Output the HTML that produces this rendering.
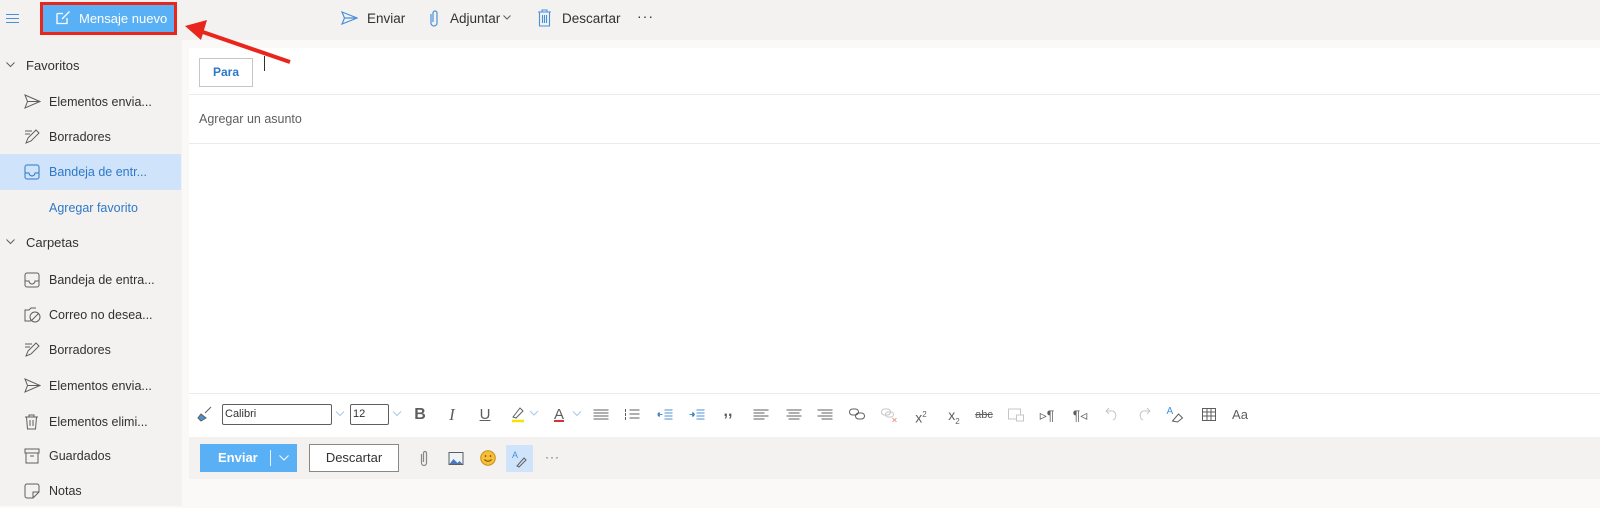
<!DOCTYPE html>
<html><head><meta charset="utf-8"><style>
*{margin:0;padding:0;box-sizing:border-box}
body{width:1600px;height:506px;background:#faf9f8;font-family:"Liberation Sans",sans-serif;font-size:12.5px;color:#323130;position:relative;overflow:hidden}
.a{position:absolute}
.side{left:0;top:0;width:182px;height:506px;background:#f3f2f1}
.top{left:0;top:0;width:1600px;height:40px;background:#f3f2f1}
.item{position:absolute;left:0;width:181px;height:34px;line-height:34px;padding-left:49px;white-space:nowrap}
.item svg{position:absolute;left:24px;top:9px}
.c{position:absolute;transform:translateX(-50%)}
.fmt{position:absolute;top:406px;font-size:14px;color:#605e5c;line-height:18px;transform:translateX(-50%)}
</style></head><body>
<div class="a top"></div>
<div class="a side"></div>
<!-- hamburger -->
<svg class="a" style="left:6px;top:13px" width="14" height="11"><path d="M0 1.5H13M0 5.5H13M0 9.5H13" stroke="#4a90d9" stroke-width="1"/></svg>
<!-- new message button -->
<div class="a" style="left:40px;top:2px;width:137px;height:33px;border:3px solid #e8261c;background:#5ab0f5"></div>
<svg class="a" style="left:56px;top:10px" width="15" height="15"><path d="M1 3.5V13.5H11V8M6 9L13.5 1.5" stroke="#fff" stroke-width="1.3" fill="none"/><path d="M1 3.5H7" stroke="#fff" stroke-width="1.3"/></svg>
<div class="a" style="left:79px;top:11px;color:#fff;font-size:13px">Mensaje nuevo</div>
<!-- top toolbar -->
<svg class="a" style="left:341px;top:11px" width="17" height="14"><path d="M1 1L16 7L1 13L3.5 7Z M3.5 7H16" stroke="#4a90d9" stroke-width="1.2" fill="none"/></svg>
<div class="a" style="left:367px;top:11px;font-size:13.5px">Enviar</div>
<svg class="a" style="left:429px;top:9px" width="10" height="18"><path d="M2 5V14A3 3 0 0 0 8 14V4A2 2 0 0 0 4 4V13" stroke="#4a90d9" stroke-width="1.2" fill="none"/></svg>
<div class="a" style="left:450px;top:11px;font-size:13.5px">Adjuntar</div>
<svg class="a" style="left:503px;top:15px" width="8" height="5"><path d="M0.5 0.5L4 4L7.5 0.5" stroke="#605e5c" fill="none"/></svg>
<svg class="a" style="left:537px;top:9px" width="15" height="18"><path d="M1 3H14M5 3V1H10V3M2.5 3V17H12.5V3M5.5 6V14M7.5 6V14M9.5 6V14" stroke="#4a90d9" stroke-width="1.1" fill="none"/></svg>
<div class="a" style="left:562px;top:11px;font-size:13.5px">Descartar</div>
<div class="a" style="left:637px;top:8px;font-size:14px;letter-spacing:1px">···</div>
<!-- sidebar -->
<svg class="a" style="left:6px;top:62px" width="9" height="6"><path d="M0.5 0.5L4.5 4.5L8.5 0.5" stroke="#605e5c" fill="none"/></svg>
<div class="a" style="left:26px;top:58px;font-size:13px">Favoritos</div>
<div class="item" style="top:85px"><svg width="17" height="15"><path d="M1 1L16 7.5L1 14L3.5 7.5Z M3.5 7.5H16" stroke="#605e5c" fill="none"/></svg>Elementos envia...</div>
<div class="item" style="top:120px"><svg width="17" height="16"><path d="M1 2H8M1 5H6M2 14L4 9L12 1L15 4L7 12Z" stroke="#605e5c" fill="none"/></svg>Borradores</div>
<div class="item" style="top:154px;height:36px;line-height:36px;background:#cfe4fa;color:#2e78c7"><svg width="16" height="16" style="top:10px"><rect x="1" y="1" width="14" height="14" rx="2" stroke="#2e78c7" fill="none"/><path d="M1 9H5A3 3 0 0 0 11 9H15" stroke="#2e78c7" fill="none"/></svg>Bandeja de entr...</div>
<div class="item" style="top:191px;color:#2e78c7">Agregar favorito</div>
<svg class="a" style="left:6px;top:239px" width="9" height="6"><path d="M0.5 0.5L4.5 4.5L8.5 0.5" stroke="#605e5c" fill="none"/></svg>
<div class="a" style="left:26px;top:235px;font-size:13px">Carpetas</div>
<div class="item" style="top:263px"><svg width="16" height="16"><rect x="1" y="1" width="14" height="14" rx="2" stroke="#605e5c" fill="none"/><path d="M1 9H5A3 3 0 0 0 11 9H15" stroke="#605e5c" fill="none"/></svg>Bandeja de entra...</div>
<div class="item" style="top:298px"><svg width="17" height="16"><path d="M7 14H1V3H5L7 1H12" stroke="#605e5c" fill="none"/><circle cx="11" cy="10" r="5" stroke="#605e5c" fill="none"/><path d="M7.5 13.5L14.5 6.5" stroke="#605e5c"/></svg>Correo no desea...</div>
<div class="item" style="top:333px"><svg width="17" height="16"><path d="M1 2H8M1 5H6M2 14L4 9L12 1L15 4L7 12Z" stroke="#605e5c" fill="none"/></svg>Borradores</div>
<div class="item" style="top:369px"><svg width="17" height="15"><path d="M1 1L16 7.5L1 14L3.5 7.5Z M3.5 7.5H16" stroke="#605e5c" fill="none"/></svg>Elementos envia...</div>
<div class="item" style="top:405px"><svg width="15" height="16"><path d="M1 3H14M5 3V1H10V3M2.5 3L3.5 15H11.5L12.5 3M6 6V12M9 6V12" stroke="#605e5c" fill="none"/></svg>Elementos elimi...</div>
<div class="item" style="top:439px"><svg width="16" height="16"><rect x="1" y="1" width="14" height="4" stroke="#605e5c" fill="none"/><path d="M2 5V15H14V5M6 8H10" stroke="#605e5c" fill="none"/></svg>Guardados</div>
<div class="item" style="top:474px"><svg width="16" height="16"><path d="M1 3A2 2 0 0 1 3 1H13A2 2 0 0 1 15 3V9L9 15H3A2 2 0 0 1 1 13Z M9 15V9H15" stroke="#605e5c" fill="none"/></svg>Notas</div>
<!-- compose -->
<div class="a" style="left:189px;top:40px;width:1411px;height:8px;background:#faf9f8"></div>
<div class="a" style="left:189px;top:48px;width:1411px;height:389px;background:#fff"></div>
<div class="a" style="left:189px;top:94px;width:1411px;height:1px;background:#edebe9"></div>
<div class="a" style="left:189px;top:143px;width:1411px;height:1px;background:#edebe9"></div>
<div class="a" style="left:189px;top:393px;width:1411px;height:1px;background:#edebe9"></div>
<div class="a" style="left:199px;top:58px;width:54px;height:29px;border:1px solid #c8c6c4;color:#2e78c7;font-weight:bold;font-size:12px;text-align:center;line-height:27px">Para</div>
<div class="a" style="left:264px;top:56px;width:1px;height:15px;background:#323130"></div>
<div class="a" style="left:199px;top:112px;color:#605e5c">Agregar un asunto</div>
<!-- format toolbar -->
<svg class="a" style="left:197px;top:406px" width="16" height="16"><path d="M14 1L8 7M4 8L9 12L4 15L1 12Z" stroke="#605e5c" fill="#4a90d9"/></svg>
<div class="a" style="left:222px;top:404px;width:110px;height:21px;border:1px solid #605e5c;border-radius:2px;font-size:11px;line-height:19px;padding-left:2px">Calibri</div>
<svg class="c" style="left:340px;top:411px" width="9" height="6"><path d="M0.5 0.5L4.5 4.5L8.5 0.5" stroke="#a7c8ea" fill="none"/></svg>
<div class="a" style="left:350px;top:404px;width:39px;height:21px;border:1px solid #605e5c;border-radius:2px;font-size:11px;line-height:19px;padding-left:2px">12</div>
<svg class="c" style="left:397px;top:411px" width="9" height="6"><path d="M0.5 0.5L4.5 4.5L8.5 0.5" stroke="#a7c8ea" fill="none"/></svg>
<div class="fmt" style="left:420px;font-weight:bold;font-size:16px">B</div>
<div class="fmt" style="left:452px;font-style:italic;font-family:'Liberation Serif';font-size:17px">I</div>
<div class="fmt" style="left:485px;text-decoration:underline;font-size:15px">U</div>
<svg class="c" style="left:525px;top:405px" width="30" height="18"><path d="M3 12L10 3L13 6L6 13Z" stroke="#605e5c" fill="none"/><path d="M2 16H14" stroke="#f5e400" stroke-width="2.5"/><path d="M20 6L24 10L28 6" stroke="#a7c8ea" fill="none"/></svg>
<div class="fmt" style="left:559px;font-size:15px;text-decoration:underline;text-decoration-color:#d13438;text-decoration-thickness:2px">A</div>
<svg class="c" style="left:577px;top:411px" width="9" height="6"><path d="M0.5 0.5L4.5 4.5L8.5 0.5" stroke="#a7c8ea" fill="none"/></svg>
<svg class="c" style="left:601px;top:409px" width="15" height="11"><path d="M0 1H15M0 4H15M0 7H15M0 10H15" stroke="#605e5c"/></svg>
<svg class="c" style="left:632px;top:409px" width="15" height="11"><path d="M5 1H15M5 5H15M5 9H15M1 0V3M1 4V7M1 8V11" stroke="#605e5c"/></svg>
<svg class="c" style="left:665px;top:409px" width="15" height="11"><path d="M7 1H15M7 4H15M7 7H15M7 10H15M0 5.5H5M2 3L0 5.5L2 8" stroke="#4a90d9"/></svg>
<svg class="c" style="left:697px;top:409px" width="15" height="11"><path d="M7 1H15M7 4H15M7 7H15M7 10H15M0 5.5H5M3 3L5 5.5L3 8" stroke="#4a90d9"/></svg>
<div class="fmt" style="left:728px;font-weight:bold;font-size:16px;top:403px">,,</div>
<svg class="c" style="left:761px;top:409px" width="15" height="11"><path d="M0 1H15M0 4H11M0 7H15M0 10H11" stroke="#605e5c"/></svg>
<svg class="c" style="left:794px;top:409px" width="15" height="11"><path d="M0 1H15M2 4H13M0 7H15M2 10H13" stroke="#605e5c"/></svg>
<svg class="c" style="left:825px;top:409px" width="15" height="11"><path d="M0 1H15M4 4H15M0 7H15M4 10H15" stroke="#605e5c"/></svg>
<svg class="c" style="left:857px;top:408px" width="17" height="12"><rect x="1" y="1" width="9" height="6" rx="3" stroke="#605e5c" fill="none"/><rect x="7" y="5" width="9" height="6" rx="3" stroke="#605e5c" fill="none"/></svg>
<svg class="c" style="left:889px;top:408px" width="17" height="14"><rect x="1" y="1" width="9" height="6" rx="3" stroke="#c8c6c4" fill="none"/><rect x="5" y="4" width="8" height="5" rx="2.5" stroke="#c8c6c4" fill="none"/><path d="M12 10L16 14M16 10L12 14" stroke="#f0a090"/></svg>
<div class="fmt" style="left:921px">x<sup style="font-size:8px">2</sup></div>
<div class="fmt" style="left:954px">x<sub style="font-size:8px">2</sub></div>
<div class="fmt" style="left:984px;font-size:11px;text-decoration:line-through">abc</div>
<svg class="c" style="left:1016px;top:408px" width="17" height="14"><rect x="1" y="1" width="12" height="10" stroke="#c8c6c4" fill="none"/><rect x="9" y="7" width="7" height="6" stroke="#c8c6c4" fill="#fff"/></svg>
<div class="fmt" style="left:1047px">▹¶</div>
<div class="fmt" style="left:1080px">¶◃</div>
<svg class="c" style="left:1112px;top:407px" width="14" height="14"><path d="M4 1L1 4L4 7M1 4H8A5 5 0 0 1 8 13" stroke="#c8c6c4" fill="none"/></svg>
<svg class="c" style="left:1144px;top:407px" width="14" height="14"><path d="M10 1L13 4L10 7M13 4H6A5 5 0 0 0 6 13" stroke="#c8c6c4" fill="none"/></svg>
<svg class="c" style="left:1175px;top:405px" width="17" height="18"><text x="0" y="9" font-size="10" fill="#4a90d9" font-family="Liberation Sans">A</text><path d="M6 16L12 9L16 13L11 17Z" stroke="#605e5c" fill="none"/></svg>
<svg class="c" style="left:1209px;top:408px" width="14" height="13"><rect x="0.5" y="0.5" width="13" height="12" stroke="#605e5c" fill="none"/><path d="M0 4H14M0 8H14M5 0V13M9 0V13" stroke="#605e5c"/></svg>
<div class="fmt" style="left:1240px;font-size:13px">Aa</div>
<!-- bottom bar -->
<div class="a" style="left:189px;top:437px;width:1411px;height:42px;background:#f3f2f1"></div>
<div class="a" style="left:200px;top:444px;width:97px;height:28px;background:#5ab0f5;color:#fff;font-weight:bold;font-size:13px;line-height:28px;padding-left:18px">Enviar</div>
<div class="a" style="left:270px;top:450px;width:1px;height:16px;background:#e8f3fd"></div>
<svg class="a" style="left:279px;top:455px" width="10" height="6"><path d="M0.5 0.5L5 5L9.5 0.5" stroke="#fff" fill="none"/></svg>
<div class="a" style="left:309px;top:444px;width:90px;height:28px;border:1px solid #8a8886;background:#fff;font-size:13px;text-align:center;line-height:26px">Descartar</div>
<svg class="c" style="left:424px;top:450px" width="8" height="17"><path d="M1.5 4V13A2.5 2.5 0 0 0 6.5 13V3A1.5 1.5 0 0 0 3.5 3V12" stroke="#8a8886" stroke-width="1.2" fill="none"/></svg>
<svg class="c" style="left:456px;top:452px" width="15" height="13"><rect x="0.5" y="0.5" width="14" height="12" stroke="#605e5c" fill="#eef3fa"/><path d="M1 12L5 7L9 11L11 9L14 12Z" fill="#4a78b8"/></svg>
<svg class="c" style="left:488px;top:450px" width="16" height="16"><circle cx="8" cy="8" r="7.3" fill="#f5c036" stroke="#c8901c"/><circle cx="5.5" cy="6" r="0.9" fill="#7a4a00"/><circle cx="10.5" cy="6" r="0.9" fill="#7a4a00"/><path d="M4.5 9.5Q8 13 11.5 9.5" stroke="#7a4a00" fill="none"/></svg>
<div class="a" style="left:506px;top:445px;width:27px;height:27px;background:#cfe4fa"></div>
<svg class="a" style="left:512px;top:450px" width="16" height="18"><text x="0" y="8" font-size="9" fill="#4a90d9" font-family="Liberation Sans">A</text><path d="M5 16L12 8L14 10L7 17Z" stroke="#605e5c" fill="none"/></svg>
<div class="a" style="left:545px;top:450px;font-size:12px;color:#605e5c;letter-spacing:1px">···</div>
<!-- arrow (on top) -->
<svg class="a" style="left:175px;top:15px" width="120" height="55"><path d="M115 47L22 15" stroke="#e8261c" stroke-width="4"/><path d="M10 11L32 5L26 25Z" fill="#e8261c"/></svg>
</body></html>
